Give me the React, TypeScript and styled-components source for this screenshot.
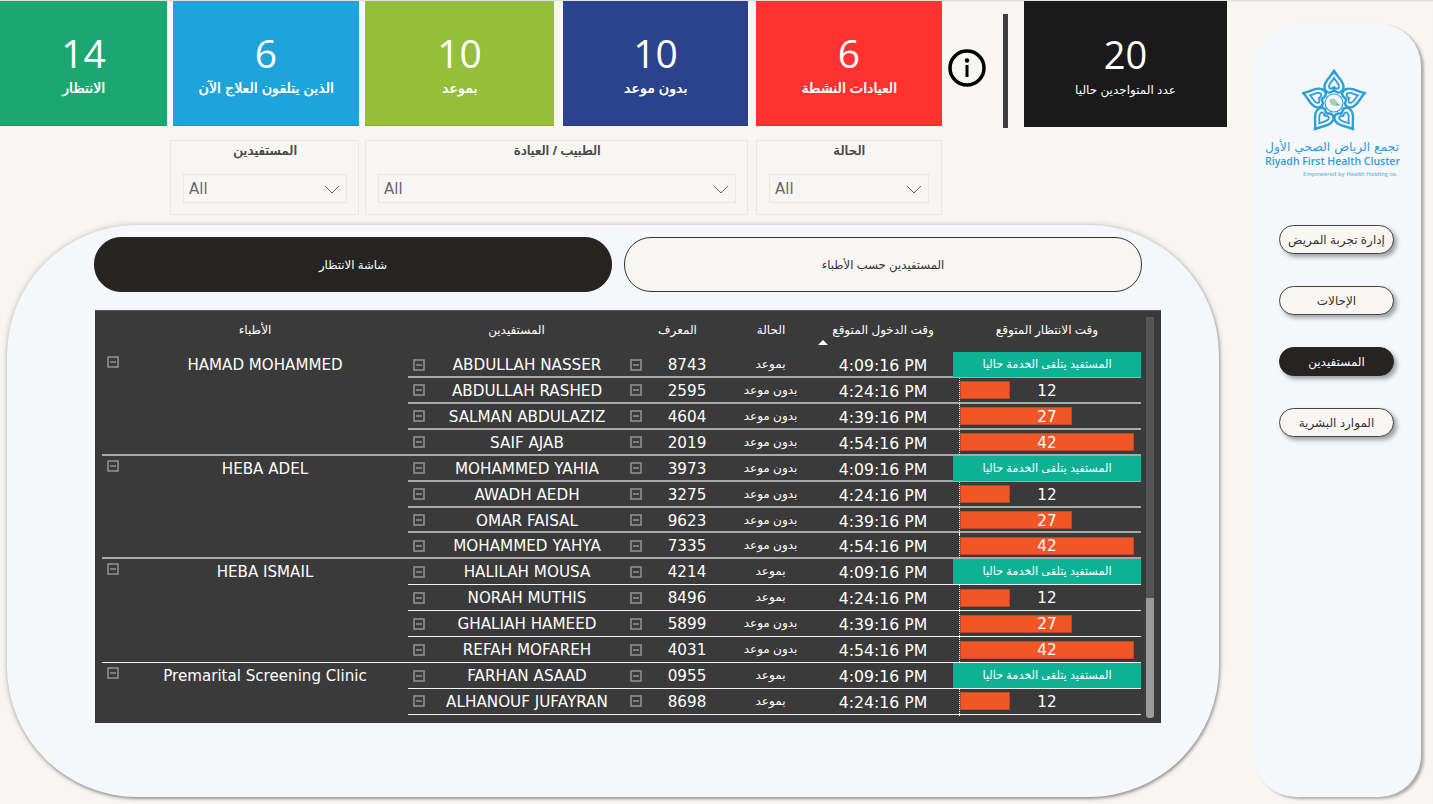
import React from 'react';
import styled, { createGlobalStyle } from 'styled-components';

const GlobalStyle = createGlobalStyle`
  html, body {
    margin: 0;
    padding: 0;
    background: #f8f6f2;
    overflow: hidden;
  }
  * { box-sizing: border-box; }
`;

const ARABIC = `"Liberation Sans", "DejaVu Sans", sans-serif`;
const LATIN = `"DejaVu Sans", "Noto Sans", sans-serif`;

const Page = styled.div`
  display: flex;
  align-items: flex-start;
  width: 1433px;
  height: 804px;
  background: #f8f6f2;
  box-shadow: inset 0 2px 2px -1px rgba(0, 0, 0, 0.12);
`;

const MainColumn = styled.div`
  width: 1254px;
  flex: none;
  padding-top: 1px;
`;

const KpiRow = styled.div`
  display: flex;
  align-items: flex-start;
  height: 126px;
`;

const KpiCard = styled.div<{ $bg: string; $w: number; $ml?: number; $small?: boolean }>`
  width: ${(p) => p.$w}px;
  margin-left: ${(p) => p.$ml ?? 0}px;
  height: ${(p) => (p.$small ? 126 : 125)}px;
  flex: none;
  background: ${(p) => p.$bg};
  color: #fff;
  display: flex;
  flex-direction: column;
  align-items: center;
  padding-top: ${(p) => (p.$small ? 31 : 30)}px;
  border-bottom: 1px solid rgba(0, 0, 0, 0.1);
`;

const KpiValue = styled.div<{ $small?: boolean }>`
  font-family: "Open Sans", sans-serif;
  font-weight: 400;
  font-size: ${(p) => (p.$small ? 38 : 39)}px;
  line-height: 44px;
`;

const KpiLabel = styled.div<{ $small?: boolean }>`
  font-family: ${ARABIC};
  font-size: ${(p) => (p.$small ? 12 : 14.2)}px;
  font-weight: 400;
  text-shadow: ${(p) => (p.$small ? 'none' : '0.5px 0 0 currentColor')};
  line-height: 18px;
  margin-top: ${(p) => (p.$small ? 5 : 4)}px;
  direction: rtl;
  white-space: nowrap;
`;

const InfoButton = styled.div`
  width: 38px;
  height: 38px;
  margin: 48px 0 0 6px;
  flex: none;
`;

const Divider = styled.div`
  width: 5px;
  height: 114px;
  margin: 13px 0 0 17px;
  background: #3d3d3d;
  flex: none;
`;

const FilterRow = styled.div`
  display: flex;
  margin: 13px 0 0 170px;
`;

const FilterBox = styled.div<{ $w: number; $ml?: number; $pad: string }>`
  width: ${(p) => p.$w}px;
  height: 75px;
  margin-left: ${(p) => p.$ml ?? 0}px;
  padding: ${(p) => p.$pad};
  border: 1px solid #e9e8e5;
  flex: none;
`;

const FilterLabel = styled.div`
  font-family: ${ARABIC};
  font-size: 13.5px;
  font-weight: 400;
  text-shadow: 0.5px 0 0 currentColor;
  line-height: 20px;
  height: 33px;
  color: #4a4a4a;
  text-align: center;
  direction: rtl;
`;

const SelectBox = styled.div`
  height: 29px;
  border: 1px solid #e9e8e5;
  display: flex;
  align-items: center;
  justify-content: space-between;
  padding: 1px 6px 0 5px;
  font-family: ${LATIN};
  font-size: 15px;
  color: #666;
`;

const MainPanel = styled.div`
  width: 1212px;
  height: 572px;
  margin: 10px 0 0 7px;
  background: #f5f7fa;
  border-radius: 130px;
  box-shadow: 0 0 6px rgba(0, 0, 0, 0.22), 1px 2px 3px rgba(0, 0, 0, 0.3);
  padding: 12px 0 0 87px;
`;

const TabRow = styled.div`
  display: flex;
  gap: 12px;
`;

const Tab = styled.div<{ $active?: boolean }>`
  width: 518px;
  height: 55px;
  border-radius: 27px;
  display: flex;
  align-items: center;
  justify-content: center;
  font-family: ${ARABIC};
  font-size: 11.7px;
  direction: rtl;
  color: ${(p) => (p.$active ? '#fff' : '#333')};
  background: ${(p) => (p.$active ? '#252423' : '#f8f6f2')};
  border: 1px solid ${(p) => (p.$active ? '#252423' : '#333')};
`;

const Table = styled.div`
  position: relative;
  width: 1066px;
  height: 413px;
  margin: 18px 0 0 1px;
  background: #3a3a3a;
  padding-left: 7px;
  overflow: hidden;
  border-top: 1px solid #555;
`;

const COLUMNS = '217px 98px 90px 140px 188px';

const HeaderRow = styled.div`
  display: grid;
  grid-template-columns: 306px ${COLUMNS};
  height: 41px;
  color: #fff;
  font-family: ${ARABIC};
  font-size: 12px;
`;

const HeaderCell = styled.div<{ $shift?: number }>`
  position: relative;
  text-align: center;
  padding-top: 10px;
  padding-left: ${(p) => p.$shift ?? 0}px;
  line-height: 18px;
  direction: rtl;
`;

const SortArrow = styled.span`
  position: absolute;
  left: 5px;
  top: 29px;
  width: 0;
  height: 0;
  border-left: 5px solid transparent;
  border-right: 5px solid transparent;
  border-bottom: 5px solid #fff;
`;

const Group = styled.div`
  display: grid;
  grid-template-columns: 306px 733px;
`;

const DoctorCell = styled.div<{ $soft: boolean; $noLine?: boolean }>`
  display: flex;
  align-items: flex-start;
  padding: 4px 0 0 5px;
  color: #fff;
  font-family: ${LATIN};
  font-size: 15.1px;
  line-height: 17px;
  border-bottom: ${(p) =>
    p.$noLine ? 'none' : p.$soft ? '2px solid #a8a8a8' : '1px solid #f2f2f2'};
`;

const DoctorName = styled.div`
  flex: 1;
  text-align: center;
  padding: 1px 0 0 3px;
  white-space: nowrap;
`;

const Row = styled.div<{ $soft: boolean }>`
  display: grid;
  grid-template-columns: ${COLUMNS};
  height: 25.93px;
  color: #fff;
  font-family: ${LATIN};
  font-size: 15.2px;
  line-height: 23px;
  border-bottom: ${(p) => (p.$soft ? '2px solid #a8a8a8' : '1px solid #f2f2f2')};
`;

const IconCell = styled.div<{ $textLeft: number }>`
  display: flex;
  align-items: center;
  padding-left: 5px;
  white-space: nowrap;

  span {
    flex: 1;
    text-align: center;
    margin-left: ${(p) => p.$textLeft}px;
    padding-top: 2px;
  }
`;

const PlainCell = styled.div`
  display: flex;
  align-items: center;
  justify-content: center;
`;

const TimeCell = styled(PlainCell)`
  font-size: 15.7px;
  padding-top: 2px;
`;

const StatusCell = styled(PlainCell)`
  font-family: ${ARABIC};
  font-size: 12px;
  direction: rtl;
  padding-left: 5px;
`;

const WaitCell = styled.div`
  display: grid;
  align-items: center;
  position: relative;
`;

const Axis = styled.i`
  position: absolute;
  left: 6px;
  top: 0;
  bottom: -2px;
  border-left: 1px dotted #fff;
`;

const ServingBadge = styled.div`
  height: 25px;
  background: #0fb194;
  font-family: ${ARABIC};
  font-size: 11.3px;
  direction: rtl;
  display: flex;
  align-items: center;
  justify-content: center;
`;

const Bar = styled.div`
  grid-area: 1 / 1;
  height: 18px;
  margin-left: 7px;
  background: #f25627;
  border: 1px solid #b64a2a;
`;

const BarValue = styled.div`
  grid-area: 1 / 1;
  text-align: center;
  padding-top: 2px;
  z-index: 1;
`;

const ScrollTrack = styled.div`
  position: absolute;
  left: 1051px;
  top: 6px;
  width: 8px;
  height: 401px;
  background: #9b9b9b;
  border-radius: 3px;
  overflow: hidden;
`;

const ScrollThumb = styled.div`
  height: 281px;
  background: #545454;
`;

const SidePanel = styled.div`
  width: 167px;
  height: 773px;
  margin-top: 24px;
  flex: none;
  background: #f5f7fa;
  border-radius: 42px;
  box-shadow: 3px 2px 3px rgba(0, 0, 0, 0.3);
  display: flex;
  flex-direction: column;
  align-items: flex-start;
  padding: 45px 0 0 11px;
`;

const LogoMark = styled.svg`
  width: 68px;
  height: 66px;
  margin-left: 35px;
  flex: none;
`;

const LogoArabic = styled.div`
  font-family: "DejaVu Sans", sans-serif;
  font-size: 12.3px;
  line-height: 13px;
  margin-top: 6px;
  color: #2f9fd6;
  direction: rtl;
  white-space: nowrap;
`;

const LogoLatin = styled.div`
  font-family: "Open Sans", sans-serif;
  font-weight: 600;
  font-size: 10.5px;
  line-height: 14px;
  color: #2f9fd6;
  white-space: nowrap;
`;

const LogoTag = styled.div`
  font-family: "Open Sans", sans-serif;
  font-weight: 600;
  font-size: 5.8px;
  line-height: 9px;
  margin: 2px 0 0 38px;
  color: #70b8e0;
  white-space: nowrap;
`;

const NavList = styled.div`
  display: flex;
  flex-direction: column;
  gap: 32px;
  margin: 46px 0 0 14px;
`;

const NavPill = styled.div<{ $active?: boolean }>`
  width: 115px;
  height: 29px;
  border-radius: 15px;
  display: flex;
  align-items: center;
  justify-content: center;
  font-family: ${ARABIC};
  font-size: 12px;
  direction: rtl;
  white-space: nowrap;
  color: ${(p) => (p.$active ? '#fff' : '#333')};
  background: ${(p) => (p.$active ? '#252423' : '#f8f6f2')};
  border: 1px solid ${(p) => (p.$active ? '#252423' : '#444')};
  box-shadow: 3px 3px 4px rgba(0, 0, 0, 0.35);
`;

type Patient = { name: string; id: string; status: string; time: string; wait: number };

const ON_TIME = 'بموعد';
const WALK_IN = 'بدون موعد';
const TIMES = ['4:09:16 PM', '4:24:16 PM', '4:39:16 PM', '4:54:16 PM'];
const WAITS = [0, 12, 27, 42];

const p = (name: string, id: string, status: string, i: number): Patient => ({
  name,
  id,
  status,
  time: TIMES[i],
  wait: WAITS[i],
});

const groups: { doctor: string; patients: Patient[] }[] = [
  {
    doctor: 'HAMAD MOHAMMED',
    patients: [
      p('ABDULLAH NASSER', '8743', ON_TIME, 0),
      p('ABDULLAH RASHED', '2595', WALK_IN, 1),
      p('SALMAN ABDULAZIZ', '4604', WALK_IN, 2),
      p('SAIF AJAB', '2019', WALK_IN, 3),
    ],
  },
  {
    doctor: 'HEBA ADEL',
    patients: [
      p('MOHAMMED YAHIA', '3973', WALK_IN, 0),
      p('AWADH AEDH', '3275', WALK_IN, 1),
      p('OMAR FAISAL', '9623', WALK_IN, 2),
      p('MOHAMMED YAHYA', '7335', WALK_IN, 3),
    ],
  },
  {
    doctor: 'HEBA ISMAIL',
    patients: [
      p('HALILAH MOUSA', '4214', ON_TIME, 0),
      p('NORAH MUTHIS', '8496', ON_TIME, 1),
      p('GHALIAH HAMEED', '5899', WALK_IN, 2),
      p('REFAH MOFAREH', '4031', WALK_IN, 3),
    ],
  },
  {
    doctor: 'Premarital Screening Clinic',
    patients: [
      p('FARHAN ASAAD', '0955', ON_TIME, 0),
      p('ALHANOUF JUFAYRAN', '8698', ON_TIME, 1),
    ],
  },
];

const kpis = [
  { value: '14', label: 'الانتظار', bg: '#1ca672', w: 167, ml: 0 },
  { value: '6', label: 'الذين يتلقون العلاج الآن', bg: '#1ea3da', w: 186, ml: 6 },
  { value: '10', label: 'بموعد', bg: '#95bf39', w: 189, ml: 6 },
  { value: '10', label: 'بدون موعد', bg: '#2b428c', w: 185, ml: 9 },
  { value: '6', label: 'العيادات النشطة', bg: '#ff3131', w: 186, ml: 8 },
];

const CollapseIcon = () => (
  <svg width="12" height="12" viewBox="0 0 12 12" style={{ flex: 'none' }}>
    <rect x="1" y="1" width="10" height="10" fill="none" stroke="#8f8f8f" strokeWidth="1.6" />
    <path d="M3 6h6" stroke="#a8a8a8" strokeWidth="1.2" />
  </svg>
);

const Chevron = () => (
  <svg width="16" height="9" viewBox="0 0 16 9">
    <path d="M1 1l7 7 7-7" fill="none" stroke="#666" strokeWidth="1" />
  </svg>
);

const Logo = () => (
  <LogoMark viewBox="-34 -34 68 66">
    {[0, 72, 144, 216, 288].map((a) => (
      <g key={a} transform={`rotate(${a})`} fill="none" stroke="#2a9fd8">
        <path
          d="M0-32.500C2-27 9.500-23 9.500-16C9.500-11 5-9 2-11.500L0-13L-2-11.500C-5-9-9.500-11-9.500-16C-9.500-23-2-27 0-32.500Z"
          strokeWidth="2.4"
          strokeLinejoin="round"
        />
        <path
          d="M0-25C1.500-22 5-20 5-16.500C5-14 2.500-13.500 0-16C-2.500-13.500-5-14-5-16.500C-5-20-1.500-22 0-25Z"
          strokeWidth="1.8"
        />
      </g>
    ))}
    <circle r="9" fill="#f5f7fa" stroke="#2a9fd8" strokeWidth="1.2" />
    <path d="M-5-3L0-5L3-1L6 2L2 3L-3 2Z" fill="#a8d0b8" />
    <path d="M2 0L6 2L3 3Z" fill="#6aa8d8" />
  </LogoMark>
);

const PatientRow = ({ item, soft }: { item: Patient; soft: boolean }) => (
  <Row $soft={soft}>
    <IconCell $textLeft={4}>
      <CollapseIcon />
      <span>{item.name}</span>
    </IconCell>
    <IconCell $textLeft={9}>
      <CollapseIcon />
      <span>{item.id}</span>
    </IconCell>
    <StatusCell>{item.status}</StatusCell>
    <TimeCell>{item.time}</TimeCell>
    {item.wait === 0 ? (
      <WaitCell>
        <ServingBadge>المستفيد يتلقى الخدمة حاليا</ServingBadge>
      </WaitCell>
    ) : (
      <WaitCell>
        <Axis />
        <Bar style={{ width: item.wait * 4.15 }} />
        <BarValue>{item.wait}</BarValue>
      </WaitCell>
    )}
  </Row>
);

export default function App() {
  return (
    <Page>
      <GlobalStyle />
      <MainColumn>
        <KpiRow>
          {kpis.map((k) => (
            <KpiCard key={k.label} $bg={k.bg} $w={k.w} $ml={k.ml}>
              <KpiValue>{k.value}</KpiValue>
              <KpiLabel>{k.label}</KpiLabel>
            </KpiCard>
          ))}
          <InfoButton>
            <svg width="38" height="38" viewBox="0 0 38 38">
              <circle cx="19" cy="19" r="17" fill="none" stroke="#000" strokeWidth="3.500" />
              <circle cx="19" cy="11.500" r="2.200" fill="#000" />
              <rect x="17.500" y="16" width="3" height="12" fill="#000" />
            </svg>
          </InfoButton>
          <Divider />
          <KpiCard $bg="#1a1a1a" $w={203} $ml={16} $small>
            <KpiValue $small>20</KpiValue>
            <KpiLabel $small>عدد المتواجدين حاليا</KpiLabel>
          </KpiCard>
        </KpiRow>

        <FilterRow>
          <FilterBox $w={189} $pad="0 11px 0 12px">
            <FilterLabel>المستفيدين</FilterLabel>
            <SelectBox>
              All
              <Chevron />
            </SelectBox>
          </FilterBox>
          <FilterBox $w={383} $ml={6} $pad="0 11px 0 12px">
            <FilterLabel>الطبيب / العيادة</FilterLabel>
            <SelectBox>
              All
              <Chevron />
            </SelectBox>
          </FilterBox>
          <FilterBox $w={186} $ml={8} $pad="0 12px">
            <FilterLabel>الحالة</FilterLabel>
            <SelectBox>
              All
              <Chevron />
            </SelectBox>
          </FilterBox>
        </FilterRow>

        <MainPanel>
          <TabRow>
            <Tab $active>شاشة الانتظار</Tab>
            <Tab>المستفيدين حسب الأطباء</Tab>
          </TabRow>
          <Table>
            <HeaderRow>
              <HeaderCell>الأطباء</HeaderCell>
              <HeaderCell>المستفيدين</HeaderCell>
              <HeaderCell $shift={7}>المعرف</HeaderCell>
              <HeaderCell $shift={6}>الحالة</HeaderCell>
              <HeaderCell>
                وقت الدخول المتوقع
                <SortArrow />
              </HeaderCell>
              <HeaderCell>وقت الانتظار المتوقع</HeaderCell>
            </HeaderRow>
            {groups.map((g, gi) => (
              <Group key={g.doctor}>
                <DoctorCell $soft={gi < 2} $noLine={gi === 3}>
                  <CollapseIcon />
                  <DoctorName>{g.doctor}</DoctorName>
                </DoctorCell>
                <div>
                  {g.patients.map((item) => (
                    <PatientRow key={item.id} item={item} soft={gi < 2} />
                  ))}
                </div>
              </Group>
            ))}
            <ScrollTrack>
              <ScrollThumb />
            </ScrollTrack>
          </Table>
        </MainPanel>
      </MainColumn>

      <SidePanel>
        <Logo />
        <LogoArabic>تجمع الرياض الصحي الأول</LogoArabic>
        <LogoLatin>Riyadh First Health Cluster</LogoLatin>
        <LogoTag>Empowered by Health Holding co.</LogoTag>
        <NavList>
          <NavPill>إدارة تجربة المريض</NavPill>
          <NavPill>الإحالات</NavPill>
          <NavPill $active>المستفيدين</NavPill>
          <NavPill>الموارد البشرية</NavPill>
        </NavList>
      </SidePanel>
    </Page>
  );
}
